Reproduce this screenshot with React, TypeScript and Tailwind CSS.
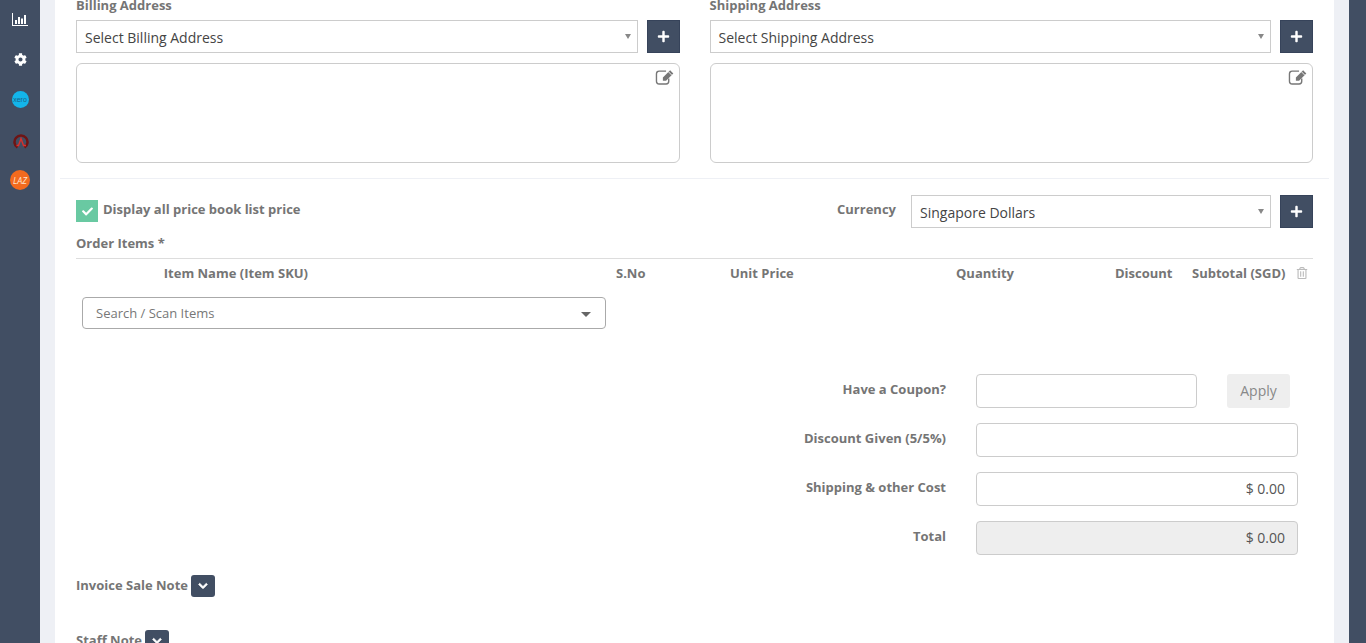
import React from 'react';
import { FaPlus, FaCog, FaChevronDown, FaCheck, FaRegTrashAlt } from 'react-icons/fa';

const labelClass = "text-[13px] leading-[18px] font-bold text-[#757575] whitespace-nowrap";

function PlusButton() {
    return (
        <button className="w-[33px] h-[33px] shrink-0 bg-[#414e63] border border-[#36435a] flex items-center justify-center text-white">
            <FaPlus size={13} />
        </button>
    );
}

function SelectBox({ text, className }: { text: string; className?: string }) {
    return (
        <div className={`h-[33px] border border-[#cccccc] bg-white flex items-center justify-between pl-2 pr-[6px] text-[14px] text-[#444444] ${className ?? ''}`}>
            <span className="pt-[1px]">{text}</span>
            <span className="w-0 h-0 border-x-[3.5px] border-x-transparent border-t-[5px] border-t-[#888888]" />
        </div>
    );
}

// pencil-square outline with a solid pencil, the stock edit icon is too thin here
function EditIcon() {
    return (
        <svg width="20" height="16" viewBox="0 0 18 15" className="absolute right-[4px] top-[5px] text-[#777777]" fill="none">
            <path d="M12.500 9v2.500a2.500 2.500 0 0 1-2.500 2.500H3.500A2.500 2.500 0 0 1 1 11.500V4.500A2.500 2.500 0 0 1 3.500 2H10" stroke="currentColor" strokeWidth="1.300" />
            <path d="M13.800 1.200 16.800 4.200 10 11H7V8z" fill="currentColor" />
            <path d="M12.300 2.700 15.300 5.700" stroke="#ffffff" strokeWidth="0.800" />
        </svg>
    );
}

function AddressColumn({ label, placeholder }: { label: string; placeholder: string }) {
    return (
        <div className="flex-1 min-w-0">
            <div className={labelClass}>{label}</div>
            <div className="flex gap-[9px] mt-[6px]">
                <SelectBox text={placeholder} className="flex-1" />
                <PlusButton />
            </div>
            <div className="relative h-[100px] mt-[10px] border border-[#cccccc] rounded-[6px] bg-white">
                <EditIcon />
            </div>
        </div>
    );
}

function TotalRow({ label, value, grey, className }: { label: string; value?: string; grey?: boolean; className?: string }) {
    return (
        <div className={`flex items-center h-[34px] pr-[15px] ${className ?? ''}`}>
            <div className={`flex-1 text-right pr-[30px] -mt-[4px] ${labelClass}`}>{label}</div>
            <div className={`w-[322px] h-[34px] border border-[#cccccc] rounded-[4px] flex items-center justify-end px-3 pb-[1px] text-[14px] text-[#555555] ${grey ? 'bg-[#eeeeee]' : 'bg-white'}`}>
                {value}
            </div>
        </div>
    );
}

function NoteToggle() {
    return (
        <button className="w-[24px] h-[22px] ml-[3px] rounded-[3px] bg-[#414e63] flex items-center justify-center text-white">
            <FaChevronDown size={10} className="stroke-current stroke-[40]" />
        </button>
    );
}

function NavIcons() {
    return (
        <div className="flex flex-col items-center pt-[13px] text-white">
            <svg width="16" height="13" viewBox="0 0 16 13" fill="currentColor">
                <path d="M0 0h1v12h15v1H0z" />
                <path d="M3 7h2v4H3zM6 4h2v7H6zM9 5.500h2V11H9zM12 2h2v9h-2z" />
            </svg>
            <FaCog size={13} className="mt-[27px]" />
            <div className="mt-[25px] w-[17px] h-[17px] rounded-full bg-[#13b5ea] flex items-center justify-center text-[7px] leading-none text-[#1c5f86]" style={{ fontFamily: '"Liberation Sans", sans-serif' }}>
                xero
            </div>
            <svg width="16" height="16" viewBox="0 0 16 16" fill="none" className="mt-[26px] ml-[2px]">
                <path d="M4.500 13.500A6.500 6.500 0 1 1 11.500 13.500" stroke="#6e1414" strokeWidth="2.500" />
                <path d="M3.500 11.500H5.500L8 4.500 10.500 11.500H13" stroke="#d9302c" strokeWidth="1.400" />
            </svg>
            <div className="mt-[20px] w-[20px] h-[20px] rounded-full bg-[#f26a1e] flex items-center justify-center text-[9px] leading-none italic text-[#ffe2cc]">
                LAZ
            </div>
        </div>
    );
}

export default function App() {
    return (
        <div className="h-[643px] overflow-hidden flex bg-[#eef0f5]" style={{ fontFamily: '"Open Sans", sans-serif' }}>
            {/* Sidebar */}
            <div className="w-[40px] shrink-0 bg-[#414e63]">
                <NavIcons />
            </div>

            {/* Card */}
            <div className="w-[1279px] ml-[15px] shrink-0 bg-white px-[21px]">
                <div className="-mt-[4px]">
                    <div className="flex gap-[30px]">
                        <AddressColumn label="Billing Address" placeholder="Select Billing Address" />
                        <AddressColumn label="Shipping Address" placeholder="Select Shipping Address" />
                    </div>

                    <div className="h-px bg-[#eef0f5] mt-[15px] -mx-[16px]" />

                    {/* Price book and currency */}
                    <div className="flex items-center mt-[16px] h-[33px]">
                        <div className="w-[22px] h-[22px] -mt-[1px] bg-[#69c9a2] flex items-center justify-center text-white">
                            <FaCheck size={11} />
                        </div>
                        <div className={`ml-[5px] -mt-[5px] ${labelClass}`}>Display all price book list price</div>
                        <div className={`ml-auto mr-[15px] -mt-[6px] ${labelClass}`}>Currency</div>
                        <SelectBox text="Singapore Dollars" className="w-[360px]" />
                        <div className="ml-[9px]">
                            <PlusButton />
                        </div>
                    </div>

                    {/* Order items */}
                    <div className={`mt-[6px] pb-[6px] border-b border-[#dddddd] ${labelClass}`}>Order Items *</div>
                    <div className={`flex mt-[5px] ${labelClass}`}>
                        <div className="w-[232px] text-right">Item Name (Item SKU)</div>
                        <div className="ml-[308px] w-[30px]">S.No</div>
                        <div className="ml-[84px] w-[63px]">Unit Price</div>
                        <div className="ml-[163px] w-[58px]">Quantity</div>
                        <div className="ml-[101px] w-[57px]">Discount</div>
                        <div className="ml-[20px] w-[94px]">Subtotal (SGD)</div>
                        <FaRegTrashAlt size={12} className="ml-[10px] mt-[3px] text-[#bbbbbb]" />
                    </div>
                    <div className="mt-[15px] ml-[6px] w-[524px] h-[32px] border border-[#aaaaaa] rounded-[4px] flex items-center justify-between pl-[13px] pr-[14px] text-[13px] text-[#777777]">
                        <span className="pt-[1px]">Search / Scan Items</span>
                        <span className="w-0 h-0 mt-[3px] border-x-[5px] border-x-transparent border-t-[5px] border-t-[#666666]" />
                    </div>

                    {/* Totals */}
                    <div className="flex items-center h-[34px] mt-[45px]">
                        <div className={`flex-1 text-right pr-[30px] -mt-[4px] ${labelClass}`}>Have a Coupon?</div>
                        <div className="w-[221px] h-[34px] border border-[#cccccc] rounded-[4px] bg-white" />
                        <button className="w-[63px] h-[34px] ml-[30px] mr-[23px] pb-[2px] rounded-[3px] bg-[#eeeeee] text-[14px] text-[#888888]">Apply</button>
                    </div>
                    <TotalRow label="Discount Given (5/5%)" className="mt-[15px]" />
                    <TotalRow label="Shipping & other Cost" value="$ 0.00" className="mt-[15px]" />
                    <TotalRow label="Total" value="$ 0.00" grey className="mt-[15px]" />

                    {/* Notes */}
                    <div className="flex items-center mt-[20px]">
                        <span className={`-mt-[2px] ${labelClass}`}>Invoice Sale Note</span>
                        <NoteToggle />
                    </div>
                    <div className="flex items-center mt-[33px]">
                        <span className={`-mt-[2px] ${labelClass}`}>Staff Note</span>
                        <NoteToggle />
                    </div>
                </div>
            </div>

            <div className="w-[15px] shrink-0" />
            <div className="flex-1 bg-[#414e63]" />
        </div>
    );
}
